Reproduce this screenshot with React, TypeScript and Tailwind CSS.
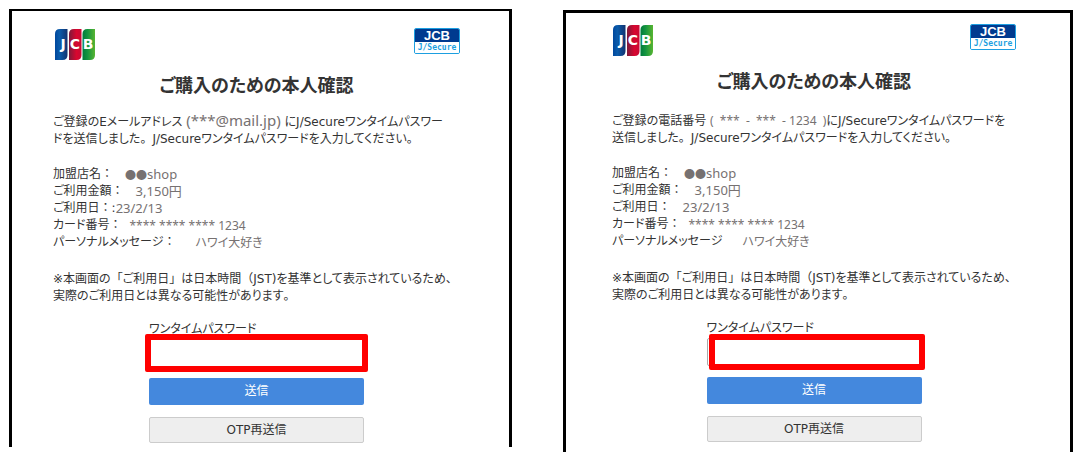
import React from 'react';
import clsx from 'clsx';

interface Detail {
  label: string;
  value: React.ReactNode;
  gap: string;
  size: string;
}

interface Props {
  id: string;
  message: React.ReactNode;
  details: Detail[];
  panelClass: string;
  headerClass: string;
  bodyClass: string;
  frameClass: string;
}

// Kana are set proportionally, punctuation keeps its full width
const Jp: React.FC<{ text: string }> = ({ text }) => (
  <>
    {text.split(/([。、「」（：])/).map((part, i) =>
      i % 2 === 1 ? (
        <span key={i} className="[font-feature-settings:normal]">{part}</span>
      ) : (
        part
      )
    )}
  </>
);

const JcbLogo: React.FC<{ id: string }> = ({ id }) => (
  <svg className="mt-px" width="40" height="31" viewBox="0 0 40 31" role="img" aria-label="JCB">
    <defs>
      <linearGradient id={`${id}-blue`}>
        <stop offset="0" stopColor="#00479d" />
        <stop offset="0.35" stopColor="#0a5bab" />
        <stop offset="1" stopColor="#12336f" />
      </linearGradient>
      <linearGradient id={`${id}-red`}>
        <stop offset="0" stopColor="#7c1a3b" />
        <stop offset="0.6" stopColor="#d8072f" />
        <stop offset="1" stopColor="#c70a35" />
      </linearGradient>
      <linearGradient id={`${id}-green`}>
        <stop offset="0" stopColor="#007b3c" />
        <stop offset="0.4" stopColor="#149440" />
        <stop offset="1" stopColor="#58b531" />
      </linearGradient>
    </defs>
    <path d="M0 5Q0 0 5 0H12.500V26Q12.500 31 7.500 31H0Z" fill={`url(#${id}-blue)`} />
    <path d="M14 5Q14 0 19 0H26.500V26Q26.500 31 21.500 31H14Z" fill={`url(#${id}-red)`} />
    <path d="M27.500 5Q27.500 0 32.500 0H40V26Q40 31 35 31H27.500Z" fill={`url(#${id}-green)`} />
    <g fill="#fff" fontFamily="'DejaVu Sans', sans-serif" fontWeight="700" fontSize="14" textAnchor="middle">
      <text x="8" y="20">J</text>
      <text x="20" y="20">C</text>
      <text x="33" y="20">B</text>
    </g>
  </svg>
);

const SecureBadge: React.FC = () => (
  <div className="flex h-[26px] w-[46px] flex-col overflow-hidden rounded-xs border border-[#1d9fe0] text-center font-bold">
    <span className="-mx-px -mt-px h-[14px] bg-[#003a8f] font-['Liberation_Sans',sans-serif] text-[13px] leading-[15px] text-white">JCB</span>
    <span className="h-[11px] bg-white font-['DejaVu_Sans_Mono',monospace] text-[8px] leading-[11px] text-[#1d9fe0]">J/Secure</span>
  </div>
);

const ConfirmPanel: React.FC<Props> = ({ id, message, details, panelClass, headerClass, bodyClass, frameClass }) => (
  <section className={clsx('border-x-3 border-black pr-2', panelClass)}>
    <header className={clsx('flex justify-between', headerClass)}>
      <JcbLogo id={id} />
      <SecureBadge />
    </header>

    <h1 className="mt-[13px] text-center text-[18px] leading-[26px] font-bold">ご購入のための本人確認</h1>

    <div className={bodyClass}>
      <p>{message}</p>

      <dl className="mt-[18px]">
        {details.map((d) => (
          <div key={d.label} className="flex items-center">
            <dt>
              <Jp text={d.label} />
            </dt>
            <dd className={clsx("font-['Noto_Sans','Noto_Sans_CJK_JP',sans-serif] leading-[17px] text-[#767171]", d.gap, d.size)}>
              {d.value}
            </dd>
          </div>
        ))}
      </dl>

      <p className="mt-5">
        <Jp text="※本画面の「ご利用日」は日本時間（JST)を基準として表示されているため、" />
        <br />
        <Jp text="実際のご利用日とは異なる可能性があります。" />
      </p>
    </div>

    <form className="mx-auto mt-4 flex w-[215px] flex-col" onSubmit={(e) => e.preventDefault()}>
      <label htmlFor={`${id}-otp`}>ワンタイムパスワード</label>
      <div className="relative mt-px">
        <input
          id={`${id}-otp`}
          type="text"
          className="block h-[28px] w-full rounded-xs border border-[#aaa] bg-white px-2 outline-none"
        />
        {/* Highlight frame over the input */}
        <span className={clsx('pointer-events-none absolute rounded-xs border-6 border-[#ff0000]', frameClass)}></span>
      </div>
      <button type="submit" className="mt-[11px] h-[27px] rounded-xs bg-[#4488dd] text-white">
        送信
      </button>
      <button type="button" className="mt-3 h-[26px] rounded-xs border border-[#ccc] bg-[#eee]">
        OTP再送信
      </button>
    </form>
  </section>
);

const shopName = (
  <>
    <span className="text-[11px] leading-none">●●</span>shop
  </>
);

const mailDetails: Detail[] = [
  { label: '加盟店名：', value: shopName, gap: 'ml-3', size: 'text-[13px]' },
  { label: 'ご利用金額：', value: '3,150円', gap: 'ml-3', size: 'text-[13px]' },
  { label: 'ご利用日：:', value: '23/2/13', gap: 'ml-0', size: 'text-[13px]' },
  { label: 'カード番号：', value: '**** **** **** 1234', gap: 'ml-2', size: 'text-[12px]' },
  { label: 'パーソナルメッセージ：', value: 'ハワイ大好き', gap: 'ml-5', size: 'text-[12px]' },
];

const phoneDetails: Detail[] = [
  { label: '加盟店名：', value: shopName, gap: 'ml-3', size: 'text-[13px]' },
  { label: 'ご利用金額：', value: '3,150円', gap: 'ml-3', size: 'text-[13px]' },
  { label: 'ご利用日：', value: '23/2/13', gap: 'ml-3', size: 'text-[13px]' },
  { label: 'カード番号：', value: '**** **** **** 1234', gap: 'ml-2', size: 'text-[12px]' },
  { label: 'パーソナルメッセージ', value: 'ハワイ大好き', gap: 'ml-5', size: 'text-[12px]' },
];

export default function App() {
  return (
    <main className="grid grid-cols-[503fr_510fr] items-start gap-[51px] bg-white py-[9px] pr-[10px] pl-[9px] font-['DejaVu_Sans','Noto_Sans_CJK_JP',sans-serif] text-[12px] leading-[17px] whitespace-nowrap text-[#333] [font-feature-settings:'palt']">
      <ConfirmPanel
        id="mail"
        message={
          <>
            ご登録のEメールアドレス{' '}
            <span className="font-['Noto_Sans',sans-serif] text-[15px] leading-none text-[#767171]">(***@mail.jp)</span>
            {' '}にJ/Secureワンタイムパスワー
            <br />
            <Jp text="ドを送信しました。J/Secureワンタイムパスワードを入力してください。" />
          </>
        }
        details={mailDetails}
        panelClass="border-t-2 pb-1"
        headerClass="pt-[17px] pr-[41px] pl-[43px]"
        bodyClass="mt-[14px] pl-[41px]"
        frameClass="-inset-x-1 -inset-y-[5px]"
      />
      <ConfirmPanel
        id="phone"
        message={
          <>
            ご登録の電話番号{' '}
            <span className="font-['Noto_Sans',sans-serif] text-[#767171]">(&nbsp; *** &nbsp;- &nbsp;*** &nbsp;- 1234 &nbsp;)</span>
            にJ/Secureワンタイムパスワードを
            <br />
            <Jp text="送信しました。J/Secureワンタイムパスワードを入力してください。" />
          </>
        }
        details={phoneDetails}
        panelClass="mt-px border-t-3 pb-[10px]"
        headerClass="pt-[11px] pr-[46px] pl-[47px]"
        bodyClass="mt-[17px] pl-[46px]"
        frameClass="-inset-y-1 left-[2px] -right-[3px]"
      />
    </main>
  );
}
